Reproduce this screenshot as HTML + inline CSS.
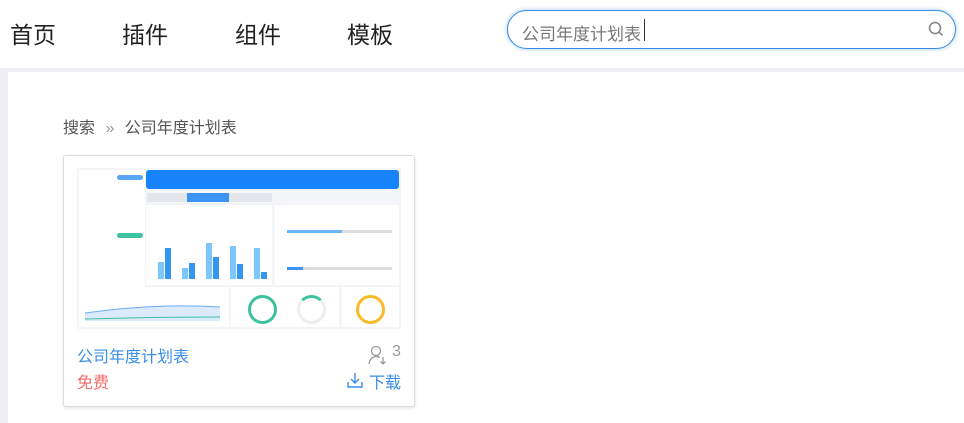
<!DOCTYPE html>
<html><head><meta charset="utf-8"><style>
*{margin:0;padding:0;box-sizing:border-box}
body{width:964px;height:423px;overflow:hidden;background:#eef0f4;font-family:"Liberation Sans","Noto Sans CJK SC",sans-serif;position:relative}
.hd{position:absolute;left:0;top:0;width:964px;height:68px;background:#fff}
.nav{position:absolute;top:16px;font-size:23px;color:#222}
.search{position:absolute;left:507px;top:10px;width:449px;height:39px;border:1px solid #3a8ee6;border-radius:20px;box-shadow:0 0 4px rgba(58,142,230,.5);background:#fff}
.search span{position:absolute;left:14px;top:9px;font-size:17px;color:#777}
.search i{position:absolute;left:136px;top:8px;width:1px;height:22px;background:#333}
.main{position:absolute;left:8px;top:72px;width:956px;height:351px;background:#fff}
.bc{position:absolute;left:63px;top:114px;font-size:16px;color:#555}
.card{position:absolute;left:63px;top:155px;width:352px;height:252px;border:1px solid #ddd;border-radius:3px;background:#fff;box-shadow:0 1px 3px rgba(0,0,0,.12)}
.th{position:absolute;left:13px;top:12px;width:324px;height:161px;background:#f3f5f9;overflow:hidden}
.b{position:absolute}
</style></head><body>
<div class="hd">
<div class="nav" style="left:10px">首页</div>
<div class="nav" style="left:122px">插件</div>
<div class="nav" style="left:235px">组件</div>
<div class="nav" style="left:347px">模板</div>
<div class="search"><span>公司年度计划表</span><i></i>
<svg style="position:absolute;right:10px;top:9px" width="18" height="18" viewBox="0 0 18 18"><circle cx="8" cy="8" r="5.5" fill="none" stroke="#888" stroke-width="1.6"/><line x1="12" y1="12" x2="15.5" y2="15.5" stroke="#888" stroke-width="1.6"/></svg></div>
</div>
<div class="main"></div>
<div class="bc">搜索 <span style="color:#999;margin:0 6px">»</span> 公司年度计划表</div>
<div class="card">
<div class="th">
<div class="b" style="left:2px;top:2px;width:66px;height:132px;background:#fff"></div>
<div class="b" style="left:40px;top:7px;width:26px;height:5px;background:#58a6f5;border-radius:3px"></div>
<div class="b" style="left:40px;top:65px;width:26px;height:5px;background:#3ec1a0;border-radius:3px"></div>
<div class="b" style="left:69px;top:2px;width:253px;height:19px;background:#1683fb;border-radius:3px"></div>
<div class="b" style="left:70px;top:25px;width:125px;height:9px;background:#e3e6ec"></div>
<div class="b" style="left:110px;top:25px;width:42px;height:9px;background:#3c94f5"></div>
<div class="b" style="left:69px;top:37px;width:126px;height:80px;background:#fff"></div>
<div class="b" style="left:198px;top:37px;width:124px;height:80px;background:#fff"></div>
<div class="b" style="left:210px;top:62px;width:105px;height:3px;background:#ddd"></div>
<div class="b" style="left:210px;top:62px;width:55px;height:3px;background:#6bb6f7"></div>
<div class="b" style="left:210px;top:99px;width:105px;height:3px;background:#ddd"></div>
<div class="b" style="left:210px;top:99px;width:16px;height:3px;background:#3c94f5"></div>
<div class="b" style="left:81px;top:94px;width:6px;height:17px;background:#7cc6fb"></div><div class="b" style="left:88px;top:80px;width:6px;height:31px;background:#3396f3"></div>
<div class="b" style="left:105px;top:100px;width:6px;height:11px;background:#7cc6fb"></div><div class="b" style="left:112px;top:95px;width:6px;height:16px;background:#3396f3"></div>
<div class="b" style="left:129px;top:75px;width:6px;height:36px;background:#7cc6fb"></div><div class="b" style="left:136px;top:89px;width:6px;height:22px;background:#3396f3"></div>
<div class="b" style="left:153px;top:78px;width:6px;height:33px;background:#7cc6fb"></div><div class="b" style="left:160px;top:96px;width:6px;height:15px;background:#3396f3"></div>
<div class="b" style="left:177px;top:80px;width:6px;height:31px;background:#7cc6fb"></div><div class="b" style="left:184px;top:104px;width:6px;height:7px;background:#3396f3"></div>
<div class="b" style="left:2px;top:119px;width:150px;height:40px;background:#fff"></div>
<svg class="b" style="left:8px;top:131px" width="140" height="24"><path d="M0 14 Q70 4 135 8 L135 22 L0 22Z" fill="#dbeafc"/><path d="M0 14 Q70 4 135 8" stroke="#6aaef5" fill="none"/><path d="M0 20 Q70 18 135 18" stroke="#3ec1a0" fill="none"/></svg>
<div class="b" style="left:154px;top:119px;width:108px;height:40px;background:#fff"></div>
<div class="b" style="left:265px;top:119px;width:57px;height:40px;background:#fff"></div>
<div class="b" style="left:171px;top:127px;width:29px;height:29px;border:3px solid #3ec1a0;border-radius:50%"></div>
<div class="b" style="left:220px;top:127px;width:29px;height:29px;border:3px solid #eee;border-top-color:#3ec1a0;border-radius:50%"></div>
<div class="b" style="left:279px;top:127px;width:29px;height:29px;border:3px solid #fbb928;border-radius:50%"></div>
</div>
<div class="b" style="left:13px;top:187px;font-size:16px;color:#3a8ee6">公司年度计划表</div>
<div class="b" style="left:13px;top:213px;font-size:16px;color:#f56c6c">免费</div>
<svg class="b" style="left:304px;top:189px" width="20" height="20" viewBox="0 0 20 20"><circle cx="8" cy="6" r="4.5" fill="none" stroke="#999" stroke-width="1.3"/><path d="M1 19 Q2 12 8 11.5 Q11 11.5 12 12.5" fill="none" stroke="#999" stroke-width="1.3"/><path d="M15 12 V19 M12.5 16.5 L15 19 L17.5 16.5" fill="none" stroke="#999" stroke-width="1.3"/></svg>
<div class="b" style="left:328px;top:187px;font-size:16px;color:#999">3</div>
<svg class="b" style="left:282px;top:215px" width="18" height="18" viewBox="0 0 18 18"><path d="M9 2 V12 M5 8 L9 12 L13 8 M2 11 V16 H16 V11" fill="none" stroke="#3a8ee6" stroke-width="1.4"/></svg>
<div class="b" style="left:305px;top:213px;font-size:16px;color:#3a8ee6">下载</div>
</div>
</body></html>
